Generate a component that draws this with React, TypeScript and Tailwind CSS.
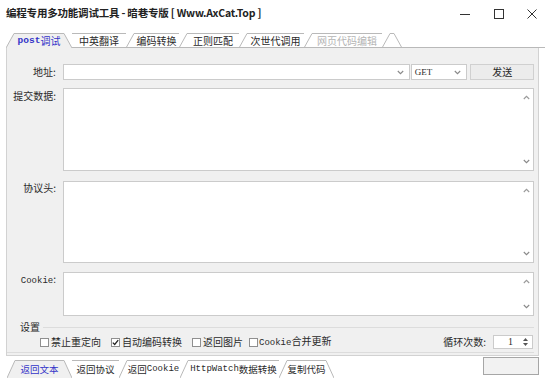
import React from 'react';

const LINE = '#b9b9b9';

type TabDef = { label: React.ReactNode; w: string; sel?: boolean; dim?: boolean };

// slanted tab edge, "/" or "\"
const Slant = ({ dir, h, base, fill }: { dir: 'l' | 'r'; h: number; base?: boolean; fill?: string }) => (
  <svg width="8" height={h} className="block shrink-0">
    {fill && (
      <polygon points={dir === 'l' ? `0,${h} 8,0 8,${h}` : `0,0 8,${h} 0,${h}`} fill={fill} />
    )}
    {dir === 'l' ? (
      <line x1="0" y1={h} x2="8" y2="0.5" stroke={LINE} strokeWidth="1" />
    ) : (
      <line x1="0" y1="0.5" x2="8" y2={h} stroke={LINE} strokeWidth="1" />
    )}
    {base && <line x1="0" y1={h - 0.5} x2="8" y2={h - 0.5} stroke={LINE} strokeWidth="1" />}
  </svg>
);

const ChevUp = () => (
  <svg width="7" height="5" viewBox="0 0 7 5" className="block">
    <path d="M0.8 4 L3.5 1.3 L6.2 4" fill="none" stroke="#9a9a9a" strokeWidth="1.1" />
  </svg>
);

const ChevDown = () => (
  <svg width="7" height="5" viewBox="0 0 7 5" className="block">
    <path d="M0.8 1 L3.5 3.7 L6.2 1" fill="none" stroke="#888" strokeWidth="1.1" />
  </svg>
);

const Area = ({ h }: { h: string }) => (
  <div className={`flex-1 ${h} bg-white border border-[#cbcbcb] flex justify-end`}>
    <div className="w-[13px] flex flex-col items-center justify-between pt-[6px] pb-[6px]">
      <ChevUp />
      <ChevDown />
    </div>
  </div>
);

const Check = ({ on }: { on?: boolean }) => (
  <span className="w-[9px] h-[9px] border border-[#8f8f8f] bg-white shrink-0 flex items-center justify-center">
    {on && (
      <svg width="7" height="7" viewBox="0 0 7 7" className="block">
        <path d="M0.8 3.6 L2.7 5.5 L6.2 1.2" fill="none" stroke="#222" strokeWidth="1.3" />
      </svg>
    )}
  </span>
);

const mono = "font-['Liberation_Mono',monospace]";

export default function App() {
  const topTabs: TabDef[] = [
    {
      label: (
        <>
          <span className={`${mono} text-[9.5px] font-bold`}>post</span>调试
        </>
      ),
      w: 'w-[50px]',
      sel: true,
    },
    { label: '中英翻译', w: 'w-[54px]' },
    { label: '编码转换', w: 'w-[45px]' },
    { label: '正则匹配', w: 'w-[52px]' },
    { label: '次世代调用', w: 'w-[57px]' },
    { label: '网页代码编辑', w: 'w-[70px]', dim: true },
  ];

  const bottomTabs: TabDef[] = [
    { label: '返回文本', w: 'w-[49px]', sel: true },
    { label: '返回协议', w: 'w-[47px]' },
    {
      label: (
        <>
          返回<span className={`${mono} text-[9px]`}>Cookie</span>
        </>
      ),
      w: 'w-[53px]',
    },
    {
      label: (
        <>
          <span className={`${mono} text-[9px]`}>HttpWatch</span>数据转换
        </>
      ),
      w: 'w-[91px]',
    },
    { label: '复制代码', w: 'w-[39px]' },
  ];

  return (
    <div className="w-[545px] h-[378px] bg-white overflow-hidden flex flex-col text-[10px] text-[#2a2a2a] font-['Noto_Sans_CJK_SC',sans-serif] leading-none">
      {/* title bar */}
      <div className="h-[27px] flex items-center pl-[6px] shrink-0">
        <span className="text-[10.5px] font-bold text-[#222] tracking-[-0.2px]">
          编程专用多功能调试工具 - 暗巷专版 [ Www.AxCat.Top ]
        </span>
        <div className="ml-auto flex items-center">
          <svg width="10" height="11" className="block mr-[24px]">
            <line x1="0" y1="6.5" x2="10" y2="6.5" stroke="#333" strokeWidth="1" />
          </svg>
          <svg width="10" height="10" className="block mr-[23px]">
            <rect x="0.5" y="0.5" width="9" height="9" fill="none" stroke="#333" strokeWidth="1" />
          </svg>
          <svg width="10" height="10" className="block mr-[8px]">
            <path d="M0.5 0.5 L9.5 9.5 M9.5 0.5 L0.5 9.5" stroke="#333" strokeWidth="1" />
          </svg>
        </div>
      </div>

      {/* top tab strip */}
      <div className="mt-[6px] h-[15px] flex shrink-0">
        <div className="w-[6px]" />
        <Slant dir="l" h={15} fill="#f0f0f0" />
        {topTabs.map((t, i) => (
          <React.Fragment key={i}>
            <div
              className={`${t.w} h-[15px] flex items-center justify-center border-t border-[#b9b9b9] ${
                t.sel ? 'bg-[#f0f0f0] text-[#3434c8]' : 'border-b'
              } ${t.dim ? 'text-[#b4b4b4]' : ''}`}
            >
              {t.label}
            </div>
            {t.sel ? <Slant dir="r" h={15} fill="#f0f0f0" /> : <Slant dir="l" h={15} base />}
          </React.Fragment>
        ))}
        <div className="w-[4px] h-[15px] border-t border-b border-[#b9b9b9]" />
        <Slant dir="r" h={15} base />
        <div className="flex-1 border-b border-[#b9b9b9]" />
      </div>

      {/* tab panel */}
      <div className="mx-[6px] h-[308px] bg-[#f0f0f0] border-x border-b border-[#d2d2d2] pt-[16px] pr-[4px] flex flex-col shrink-0">
        {/* address row */}
        <div className="flex h-[16px] items-center">
          <span className="w-[49px] text-right">地址:</span>
          <div className="ml-[7px] w-[349px] h-[16px] bg-white border border-[#cbcbcb] flex items-center justify-end pr-[5px]">
            <ChevDown />
          </div>
          <div className="ml-[1px] w-[57px] h-[16px] bg-white border border-[#cbcbcb] flex items-center pl-[3px] pr-[5px]">
            <span className="font-['Liberation_Serif',serif] text-[9px]">GET</span>
            <span className="ml-auto">
              <ChevDown />
            </span>
          </div>
          <div className="ml-[3px] w-[64px] h-[16px] bg-[#ececec] border border-[#d0d0d0] flex items-center justify-center">
            发送
          </div>
        </div>

        {/* post data */}
        <div className="flex mt-[8px]">
          <span className="w-[49px] text-right pt-[3px]">提交数据:</span>
          <div className="ml-[7px] flex flex-1">
            <Area h="h-[83px]" />
          </div>
        </div>

        {/* headers */}
        <div className="flex mt-[10px]">
          <span className="w-[49px] text-right pt-[2px]">协议头:</span>
          <div className="ml-[7px] flex flex-1">
            <Area h="h-[82px]" />
          </div>
        </div>

        {/* cookie */}
        <div className="flex mt-[9px]">
          <span className="w-[49px] text-right pt-[2px]">
            <span className={`${mono} text-[9px]`}>Cookie</span>:
          </span>
          <div className="ml-[7px] flex flex-1">
            <Area h="h-[44px]" />
          </div>
        </div>

        {/* settings group */}
        <div className="mt-[5px] flex flex-col">
          <div className="h-[12px] flex items-center">
            <span className="ml-[13px]">设置</span>
            <div className="flex-1 h-px bg-[#dcdcdc] ml-[3px]" />
          </div>
          <div className="mt-[2px] h-[14px] flex items-center pl-[33px] pr-[1px]">
            <Check />
            <span className="ml-[2px]">禁止重定向</span>
            <span className="ml-[10px]">
              <Check on />
            </span>
            <span className="ml-[2px]">自动编码转换</span>
            <span className="ml-[10px]">
              <Check />
            </span>
            <span className="ml-[2px]">返回图片</span>
            <span className="ml-[6px]">
              <Check />
            </span>
            <span className="ml-[1px]">
              <span className={`${mono} text-[9px]`}>Cookie</span>合并更新
            </span>
            <span className="ml-auto">循环次数:</span>
            <div className="ml-[7px] w-[40px] h-[14px] bg-white border border-[#cbcbcb] flex items-center pl-[14px] pr-[4px]">
              <span className="font-['Liberation_Serif',serif] text-[10px]">1</span>
              <div className="ml-auto flex flex-col gap-[2px]">
                <svg width="5" height="3" className="block">
                  <polygon points="0,3 2.5,0 5,3" fill="#555" />
                </svg>
                <svg width="5" height="3" className="block">
                  <polygon points="0,0 2.5,3 5,0" fill="#555" />
                </svg>
              </div>
            </div>
          </div>
          <div className="mt-[3px] h-px bg-[#dcdcdc]" />
        </div>
      </div>

      {/* bottom tab strip */}
      <div className="flex items-start pl-[7px] pr-[6px] mt-[1px]">
        <div className="flex mt-[3px]">
          <Slant dir="l" h={18} fill="#f0f0f0" />
          {bottomTabs.map((t, i) => (
            <React.Fragment key={i}>
              <div
                className={`${t.w} h-[18px] flex items-center justify-center border-t border-[#b9b9b9] text-[9.5px] ${
                  t.sel ? 'bg-[#f0f0f0] text-[#3434c8]' : ''
                }`}
              >
                {t.label}
              </div>
              {i === 0 || i === bottomTabs.length - 1 ? (
                <Slant dir="r" h={18} fill={t.sel ? '#f0f0f0' : undefined} />
              ) : (
                <Slant dir="l" h={18} />
              )}
            </React.Fragment>
          ))}
        </div>
        <div className="ml-auto w-[56px] h-[18px] bg-[#f2f2f2] border border-[#a6a6a6]" />
      </div>
    </div>
  );
}
